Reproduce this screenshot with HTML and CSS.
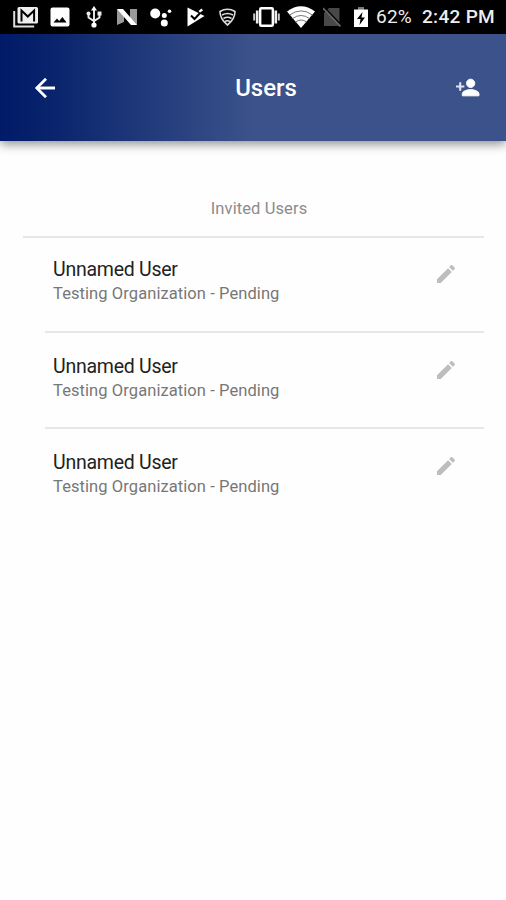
FILE: index.html
```html
<!DOCTYPE html>
<html lang="en">
<head>
<meta charset="utf-8">
<title>Users</title>
<link rel="stylesheet" href="styles.css">
</head>
<body>
<div class="status">
  <svg class="ic" width="26" height="22" viewBox="0 0 26 22"><path d="M1.2 5v15.500h20" fill="none" stroke="#ddd" stroke-width="2"/><rect x="4.500" y="1" width="20.500" height="16.500" rx="1.500" fill="#eee"/><path d="M8.500 15.500V4.500l6.300 6 6.300-6v11" fill="none" stroke="#000" stroke-width="2"/></svg>
  <svg class="ic" width="20" height="20" viewBox="0 0 20 20"><rect x=".5" y=".5" width="19" height="19" rx="2" fill="#fff"/><path d="M3.500 15.500l3.500-4 2.200 2.500 3.200-4 4.200 5.500z"/></svg>
  <svg class="ic" width="16" height="22" viewBox="0 0 16 22"><path d="M8 3v15M2.500 7v4.500L8 15l5.500-3.500V7" fill="none" stroke="#eee" stroke-width="1.900"/><path d="M8 0l3 4.500H5z" fill="#fff"/><circle cx="8" cy="19" r="2.600" fill="#fff"/><circle cx="2.500" cy="7.500" r="2" fill="#eee"/><path d="M11.500 5.500h4v4h-4z" fill="#eee"/></svg>
  <svg class="ic" width="22" height="18" viewBox="0 0 22 18"><path d="M1 1l7 5v8l-7 3zM14 1h7v16l-7-5z" fill="#999"/><path d="M1 1h6l14 16h-6z" fill="#fff"/></svg>
  <svg class="ic" width="22" height="19" viewBox="0 0 22 19" fill="#fff"><circle cx="5.200" cy="5.500" r="5"/><circle cx="14.300" cy="7.500" r="2.500"/><circle cx="19.500" cy="3.300" r="1.800"/><circle cx="14.300" cy="15" r="3.500"/></svg>
  <svg class="ic" width="18" height="20" viewBox="0 0 18 20"><path d="M.5.5L17.500 9 .5 19.500z" fill="#fff"/><path d="M4 8.500l3.500 3.500L15 4" fill="none" stroke="#000" stroke-width="2"/><path d="M11.500 4l3-2.500 1.500 2-3 2z" fill="#fff"/></svg>
  <svg class="ic" width="17" height="18" viewBox="0 0 17 18" fill="none" stroke="#ddd" stroke-width="1.600"><path d="M1 3.500Q8.500-1 16 3.500C16 9 13 13.500 8.500 17 4 13.500 1 9 1 3.500z"/><path d="M3 7q5.500-3 11 0M4.500 10.500q4-2.500 8 0M6 13.500q2.500-1.500 5 0"/></svg>
  <svg class="ic" width="27" height="20" viewBox="0 0 27 20"><rect x="7.200" y="1.200" width="12.600" height="17.600" rx="1" fill="none" stroke="#fff" stroke-width="2.400"/><path d="M4.200 3.500v13M22.800 3.500v13" stroke="#eee" stroke-width="2.600"/><path d="M1.200 6.500v7M25.800 6.500v7" stroke="#ccc" stroke-width="2"/></svg>
  <svg class="ic" width="28" height="22" viewBox="0 0 28 22"><path d="M0 5.500Q14-5 28 5.500L14 22z" fill="#fff"/><path d="M2.500 9Q14 .8 25.500 9M5.500 12.500q8.500-6 17 0M8.500 16q5.500-4 11 0" fill="none" stroke="#777" stroke-width="1"/></svg>
  <svg class="ic" width="18" height="20" viewBox="0 0 18 20"><path d="M6 1h10.500v18H1V6z" fill="#484848"/><path d="M1 0l18 19" stroke="#000" stroke-width="1.500"/><path d="M0 1l17.500 18.500" stroke="#666" stroke-width="1.600"/></svg>
  <svg class="ic" width="16" height="21" viewBox="0 0 16 21"><path d="M5 0h6v3H5z" fill="#777"/><path d="M1 2.500h14V20H1z" fill="#fff"/><path d="M9.500 5L4 12h3.500L6.500 18 12 10.500H8.500z"/></svg>
  <span class="pct">62%</span>
  <span class="time">2:42 PM</span>
</div>
<header class="bar">
  <svg class="back" width="20" height="20" viewBox="4 4 16 16"><path d="M20 11H7.830l5.590-5.590L12 4l-8 8 8 8 1.410-1.410L7.830 13H20z" fill="#fff" stroke="#fff" stroke-width=".3"/></svg>
  <h1 class="title">Users</h1>
  <svg class="add" width="25" height="25" viewBox="0 0 24 24" fill="#fff"><path d="M6 10V7H4v3H1v2h3v3h2v-3h3v-2z" opacity=".85"/><path d="M15 12c2.210 0 4-1.790 4-4s-1.790-4-4-4-4 1.790-4 4 1.790 4 4 4zm0 2c-2.670 0-8 1.340-8 4v2h16v-2c0-2.660-5.330-4-8-4z" stroke="#fff" stroke-width=".9"/></svg>
</header>
<main class="content">
  <h2 class="section">Invited Users</h2>
  <ul class="list">
    <li class="row"><div><p class="name">Unnamed User</p><p class="org">Testing Organization - Pending</p></div><svg class="edit" width="18" height="18" viewBox="3 3 18 18"><path d="M3 17.250V21h3.750L17.810 9.940l-3.750-3.750zM20.710 7.040c.39-.39.39-1.020 0-1.410l-2.340-2.340a1 1 0 0 0-1.410 0l-1.830 1.830 3.750 3.750z"/></svg></li>
    <li class="row"><div><p class="name">Unnamed User</p><p class="org">Testing Organization - Pending</p></div><svg class="edit" width="18" height="18" viewBox="3 3 18 18"><path d="M3 17.250V21h3.750L17.810 9.940l-3.750-3.750zM20.710 7.040c.39-.39.39-1.020 0-1.410l-2.340-2.340a1 1 0 0 0-1.410 0l-1.830 1.830 3.750 3.750z"/></svg></li>
    <li class="row"><div><p class="name">Unnamed User</p><p class="org">Testing Organization - Pending</p></div><svg class="edit" width="18" height="18" viewBox="3 3 18 18"><path d="M3 17.250V21h3.750L17.810 9.940l-3.750-3.750zM20.710 7.040c.39-.39.39-1.020 0-1.410l-2.340-2.340a1 1 0 0 0-1.410 0l-1.830 1.830 3.750 3.750z"/></svg></li>
  </ul>
</main>
</body>
</html>
```
FILE: styles.css
```css
* { box-sizing: border-box; margin: 0; padding: 0; }
body { width: 506px; height: 900px; overflow: hidden; background: #fefefe; font-family: Roboto, "Liberation Sans", sans-serif; }
svg { display: block; }

.status {
  display: grid;
  grid-template-columns: 37px 36px 30px 34px 37px 32px 34px 34px 36px 30px 23px 46px 75px;
  grid-template-rows: 34px;
  align-items: center;
  height: 34px;
  padding-left: 13px;
  background: #000;
  color: #eee;
  font-size: 19px;
  line-height: 36px;
  white-space: nowrap;
}
.pct { letter-spacing: 0.2px; }
.time { font-weight: 500; letter-spacing: 0.3px; }

.bar {
  display: grid;
  grid-template-columns: 60px 1fr 60px;
  align-items: center;
  height: 107px;
  padding: 0 26px 0 35px;
  background: linear-gradient(90deg, #001a68 0, #0a256d 55px, #3b528a 253px, #3b528a 100%);
  box-shadow: 0 3px 10px rgba(0, 0, 0, 0.45);
}
.title { padding-left: 17px; color: #fff; font-size: 24px; font-weight: 500; text-align: center; }
.add { justify-self: end; }
.back { margin-top: 1px; }

.content { padding: 56px 22px 0 23px; }
.section { height: 41px; padding-left: 11px; border-bottom: 2px solid #e6e6e6; color: #8c8c8c; font-size: 16.500px; font-weight: 400; line-height: 24px; text-align: center; letter-spacing: 0.1px; }
.list { list-style: none; padding-left: 22px; }
.row { display: flex; justify-content: space-between; height: 96px; padding: 22px 29px 0 8px; border-bottom: 2px solid #e6e6e6; }
.row:first-child { height: 95px; padding-top: 20px; }
.row:last-child { border-bottom: 0; }
.name { color: #222; font-size: 19.500px; line-height: 24px; letter-spacing: -0.25px; }
.org { color: #777; font-size: 16.500px; line-height: 24px; letter-spacing: 0.08px; }
.edit { margin-top: 6px; fill: #bdbdbd; }
.row:first-child .edit { margin-top: 7px; }
```
